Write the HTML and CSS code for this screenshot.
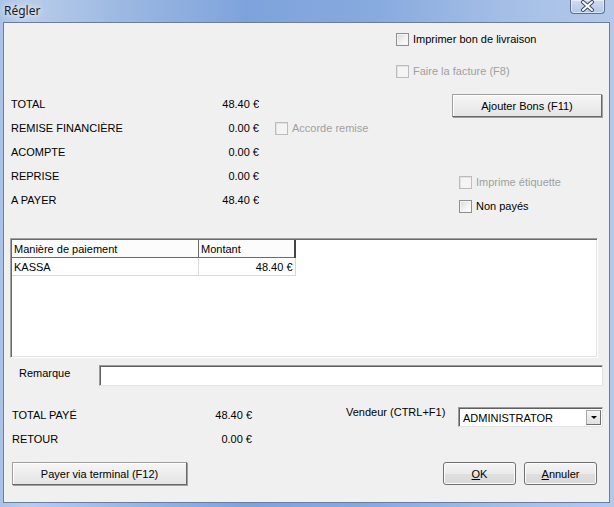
FILE: index.html
```html
<!DOCTYPE html>
<html lang="fr">
  <head>
    <meta charset="UTF-8">
    <title>Régler</title>
    <link rel="stylesheet" href="styles.css">
  </head>
  <body>
    <div class="window">
      <div class="titlebar">
        <span class="title">Régler</span>
        <span class="close">
          <svg width="33" height="13" viewBox="0 0 33 13">
            <path d="M12 2 L21 10 M21 2 L12 10" stroke="#3c4a66" stroke-width="4" stroke-linecap="round" fill="none" />
            <path d="M12 2 L21 10 M21 2 L12 10" stroke="#fff" stroke-width="2" stroke-linecap="round" fill="none" />
          </svg>
        </span>
      </div>
      <div class="client">
        <div class="top-opts">
          <div class="check"><span class="box"></span>Imprimer bon de livraison</div>
          <div class="check disabled"><span class="box"></span>Faire la facture (F8)</div>
        </div>

        <div class="summary">
          <div class="totals">
            <span class="lbl">TOTAL</span><span class="val">48.40 €</span><span></span>
            <span class="lbl">REMISE FINANCIÈRE</span><span class="val">0.00 €</span>
            <div class="check disabled remise"><span class="box"></span>Accorde remise</div>
            <span class="lbl">ACOMPTE</span><span class="val">0.00 €</span><span></span>
            <span class="lbl">REPRISE</span><span class="val">0.00 €</span><span></span>
            <span class="lbl">A PAYER</span><span class="val">48.40 €</span><span></span>
          </div>
          <div class="side">
            <button class="btn flat add-bons">Ajouter Bons (F11)</button>
            <div class="side-checks">
              <div class="check disabled"><span class="box"></span>Imprime étiquette</div>
              <div class="check"><span class="box"></span>Non payés</div>
            </div>
          </div>
        </div>

        <div class="payments">
          <table class="grid">
            <thead>
              <tr><th class="c-mode">Manière de paiement</th><th class="c-amount">Montant</th></tr>
            </thead>
            <tbody>
              <tr><td>KASSA</td><td class="num">48.40 €</td></tr>
            </tbody>
          </table>
        </div>

        <div class="remark">
          <span class="remark-label">Remarque</span>
          <span class="input"></span>
        </div>

        <div class="paid">
          <div class="paid-totals">
            <span class="lbl">TOTAL PAYÉ</span><span class="val">48.40 €</span>
            <span class="lbl">RETOUR</span><span class="val">0.00 €</span>
          </div>
          <div class="vendor">
            <span class="vendor-label">Vendeur (CTRL+F1)</span>
            <div class="select">
              <span>ADMINISTRATOR</span>
              <span class="arrow"></span>
            </div>
          </div>
        </div>

        <div class="actions">
          <button class="btn flat terminal">Payer via terminal (F12)</button>
          <div class="dlg-btns">
            <button class="btn round"><u>O</u>K</button>
            <button class="btn round"><u>A</u>nnuler</button>
          </div>
        </div>
      </div>
    </div>
  </body>
</html>
```

FILE: styles.css
```css
body {
  margin: 0;
  font-family: "Liberation Sans", Arial, sans-serif;
  font-size: 11px;
  color: #000;
}

.window {
  width: 614px;
  height: 507px;
  box-sizing: border-box;
  padding: 0 4px 4px 3px;
  display: flex;
  flex-direction: column;
  background: linear-gradient(to right, #a9c2e7 0%, #b9cdea 4%, #9cb8e2 20%, #7ea3dc 40%, #86a9de 60%, #a4bee6 82%, #b4c9ea 100%);
}

.titlebar {
  height: 22px;
  display: flex;
  justify-content: space-between;
  align-items: flex-start;
}

.title {
  font-family: "Noto Sans", sans-serif;
  font-size: 12px;
  color: #1b1b1b;
  margin: 2px 0 0 1px;
  text-shadow: 0 0 6px #fff, 0 0 10px rgba(255, 255, 255, 0.7);
}

.close {
  width: 33px;
  height: 13px;
  margin-right: 5px;
  border: 1px solid #5d6f92;
  border-top: none;
  border-radius: 0 0 4px 4px;
  background: linear-gradient(#cfdcf0, #b3c7e6);
  box-shadow: inset 0 0 0 1px rgba(255, 255, 255, 0.5);
  display: flex;
}

.client {
  flex: 1;
  background: #f0f0f0;
  border: 1px solid #6a7e9c;
}

/* checkboxes */
.check {
  display: flex;
  align-items: center;
  height: 16px;
  white-space: nowrap;
}

.box {
  width: 11px;
  height: 11px;
  margin-right: 4px;
  border: 1px solid #8e8f8f;
  background: linear-gradient(135deg, #d8d8d8, #f4f4f4 60%, #fff);
  box-shadow: inset 0 0 0 1px #f4f4f4;
}

.check.disabled {
  color: #a0a0a0;
}

.check.disabled .box {
  border-color: #bcbcbc;
  background: #f4f4f4;
  box-shadow: inset 1px 1px 0 #e2e2e2;
}

/* buttons */
.btn {
  font-family: inherit;
  font-size: 11px;
  color: #000;
  padding: 0;
  cursor: pointer;
}

.btn.flat {
  border: 1px solid #a0a0a0;
  border-right-color: #696969;
  border-bottom-color: #696969;
  box-shadow: 1px 1px 0 #a0a0a0, inset 1px 1px 0 #fff;
  background: linear-gradient(#f6f6f6, #e4e4e4);
}

.btn.round {
  width: 73px;
  height: 23px;
  border: 1px solid #707070;
  border-radius: 3px;
  background: linear-gradient(#f4f4f4, #ebebeb 50%, #dfdfdf 51%, #d9d9d9);
  box-shadow: inset 0 0 0 1px #fcfcfc;
}

/* top options */
.top-opts {
  padding: 8px 0 0 392px;
  display: flex;
  flex-direction: column;
  gap: 16px;
}

/* summary */
.summary {
  margin-top: 12px;
  display: flex;
}

.totals {
  width: 441px;
  padding-left: 7px;
  display: grid;
  grid-template-columns: 160px 88px auto;
  grid-auto-rows: 24px;
  align-items: center;
  padding-top: 1px;
}

.val {
  text-align: right;
}

.remise {
  margin-left: 16px;
}

.side {
  width: 151px;
}

.add-bons {
  margin-top: 3px;
  width: 150px;
  height: 23px;
}

.side-checks {
  margin-top: 53px;
  padding-left: 7px;
}

.side-checks .check {
  height: 24px;
}

/* payments grid */
.payments {
  margin: 20px 0 0 6px;
  width: 588px;
  height: 120px;
  box-sizing: border-box;
  background: #fff;
  border: 1px solid;
  border-color: #a0a0a0 #fff #fff #a0a0a0;
  box-shadow: inset 1px 1px 0 #696969, inset -1px -1px 0 #e3e3e3;
  padding: 1px 0 0 1px;
}

.grid {
  border-collapse: collapse;
  table-layout: fixed;
}

.grid th,
.grid td {
  height: 17px;
  padding: 0 2px;
  font-weight: normal;
  text-align: left;
  white-space: nowrap;
}

.grid th {
  border-right: 1px solid #6b6b6b;
  border-bottom: 1px solid #6b6b6b;
  background: #fcfcfc;
}

.grid th.c-amount {
  border-right: 2px solid #444;
}

.c-mode {
  width: 182px;
}

.c-amount {
  width: 91px;
}

.grid td {
  border-right: 1px solid #d8d8d8;
  border-bottom: 1px solid #d8d8d8;
}

.grid td.num {
  text-align: right;
}

/* remark */
.remark {
  margin-top: 7px;
  display: flex;
  align-items: flex-start;
}

.remark-label {
  margin-left: 15px;
  width: 80px;
  line-height: 16px;
}

.input {
  width: 504px;
  height: 21px;
  box-sizing: border-box;
  background: #fff;
  border: 1px solid;
  border-color: #9a9a9a #e3e3e3 #e3e3e3 #9a9a9a;
  box-shadow: inset 1px 1px 0 #5f5f5f;
}

/* paid */
.paid {
  margin-top: 17px;
  display: flex;
}

.paid-totals {
  width: 240px;
  padding-left: 8px;
  display: grid;
  grid-template-columns: 150px 90px;
  grid-auto-rows: 24px;
  align-items: center;
}

.vendor {
  margin: 4px 0 0 94px;
  display: flex;
  align-items: flex-start;
}

.vendor-label {
  width: 112px;
  line-height: 14px;
  margin-top: -2px;
}

.select {
  width: 145px;
  height: 20px;
  box-sizing: border-box;
  background: #fff;
  border: 1px solid;
  border-color: #9a9a9a #e3e3e3 #e3e3e3 #9a9a9a;
  box-shadow: inset 1px 1px 0 #5f5f5f;
  display: flex;
  justify-content: space-between;
  align-items: center;
  padding: 1px 1px 0 4px;
}

.arrow {
  width: 15px;
  height: 15px;
  box-sizing: border-box;
  border: 1px solid #a8a8a8;
  border-right-color: #6f6f6f;
  border-bottom-color: #6f6f6f;
  background: linear-gradient(#f4f4f4, #e0e0e0);
  display: flex;
  align-items: center;
  justify-content: center;
}

.arrow::after {
  content: "";
  border-left: 3px solid transparent;
  border-right: 3px solid transparent;
  border-top: 3px solid #000;
}

/* bottom buttons */
.actions {
  margin-top: 11px;
  padding: 0 12px 0 8px;
  display: flex;
  justify-content: space-between;
  align-items: flex-start;
}

.terminal {
  width: 175px;
  height: 23px;
}

.dlg-btns {
  display: flex;
  gap: 8px;
}
```
